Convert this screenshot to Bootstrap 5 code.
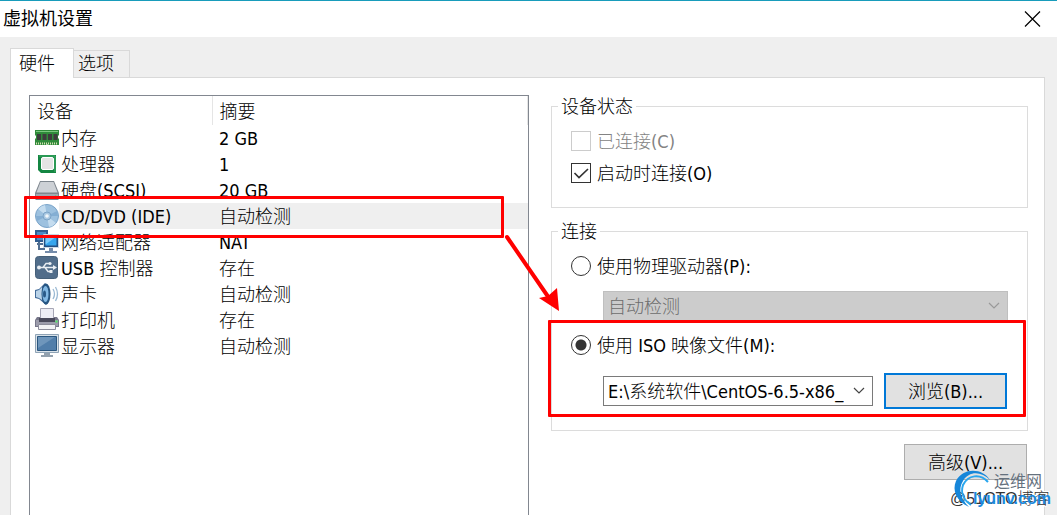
<!DOCTYPE html>
<html lang="zh-CN">
<head>
<meta charset="utf-8">
<meta name="viewport" content="width=device-width, initial-scale=1">
<title>虚拟机设置</title>
<link href="https://cdn.jsdelivr.net/npm/bootstrap@5.3.0/dist/css/bootstrap.min.css" rel="stylesheet">
<style>
body{font:300 18px/26px "DejaVu Sans Condensed","Noto Sans CJK SC",sans-serif;color:#000;background:#efefef}
.window{border-top:1px solid #189cbb;overflow:hidden}
.titlebar{height:36px;padding:0 16px 0 3px;font-weight:400}
.close-btn{width:18px;height:18px}
.tabs{padding:11px 0 0 10px}
.tab{border:1px solid #d9d9d9;border-bottom:0;background:#efefef;color:#000;font:inherit;height:27px;padding:0 15px 0 4px}
.tab.active{background:#fff;height:30px;padding:0 18px 0 8px;margin-bottom:-1px;z-index:1}
.panel{margin:0 12px 0 10px;border:1px solid #d9d9d9;border-bottom:0;background:#fff;padding:14px 16px 0 18px;display:grid;grid-template-columns:500fr 477fr;column-gap:22px}
.devices{border:1px solid #828790;border-bottom:0;margin-top:3px}
.device-table{width:100%;table-layout:fixed;line-height:24px}
.device-table th{font-weight:300;height:29px;padding:3px 7px 0;border-right:1px solid #e5e5e5}
.device-table td{height:26px;padding:2px 0 0;white-space:nowrap}
.device-table td:first-child{padding:1px 0 1px 5px}
.device-table td:nth-child(2){padding-left:2px}
.device-table td:nth-child(3){padding-left:7px}
.device-table svg{display:block;width:24px;height:24px}
.selected td:not(:first-child){background:#efefef}
.group{border:1px solid #dcdcdc;padding:5px 19px 18px}
.group legend{font-size:18px;line-height:26px;padding:2px 3px 0;margin:0 0 0 -13px}
.group + .group{margin-top:9px;padding-bottom:21px}
.choice{height:32px;gap:6px}
.choice input{appearance:none;width:20px;height:20px;margin:0;border:1px solid #333;background:#fff;flex:none}
.choice input[type=radio]{border-radius:50%}
.choice input[type=radio]:checked{background:radial-gradient(circle,#333 5px,#fff 6px)}
.choice input[type=checkbox]:checked{background:#fff url("data:image/svg+xml,%3Csvg xmlns='http://www.w3.org/2000/svg' viewBox='0 0 18 18'%3E%3Cpath d='M2.500 9l4.500 4.500L16 5' fill='none' stroke='%23333' stroke-width='1.700'/%3E%3C/svg%3E")}
.choice input:disabled{border-color:#ccc}
.choice span{padding-top:1px}
.choice.off{color:#838383}
.combo{appearance:none;font:inherit;height:30px;line-height:26px;border:1px solid #7a7a7a;border-radius:0;color:#000;padding:1px 28px 0 4px;min-width:0;background:#fff url("data:image/svg+xml,%3Csvg xmlns='http://www.w3.org/2000/svg' viewBox='0 0 12 8'%3E%3Cpath d='M1 1l5 5 5-5' fill='none' stroke='%23444' stroke-width='1.200'/%3E%3C/svg%3E") no-repeat right 7px center/12px 8px}
.combo:disabled{opacity:1;color:#6d6d6d;border-color:#bfbfbf;background-color:#ccc;background-image:url("data:image/svg+xml,%3Csvg xmlns='http://www.w3.org/2000/svg' viewBox='0 0 12 8'%3E%3Cpath d='M1 1l5 5 5-5' fill='none' stroke='%23999' stroke-width='1.200'/%3E%3C/svg%3E")}
.indent{margin-left:32px}
.drive{margin-top:9px}
.iso-row{gap:11px;padding-right:1px}
.push{width:123px;height:36px;background:#e1e1e1;border:1px solid #adadad;color:#000;font:inherit;padding:2px 0 0}
.push.focus{border:2px solid #0078d7}
.advanced{margin:13px 1px 0 0}
.mark-box{border:3px solid #f00;border-radius:1px;pointer-events:none}
.mark-row{left:-6px;top:100px;width:480px;height:42px}
.mark-iso{left:-23px;right:-18px;top:-1px;bottom:-8px}
.mark-arrow{left:-48px;top:139px;pointer-events:none}
.watermark{right:0;bottom:0;pointer-events:none}
</style>
</head>
<body>
<div class="window min-vh-100 d-flex flex-column position-relative">
<header class="titlebar bg-white d-flex align-items-center justify-content-between">
<span>虚拟机设置</span>
<button class="close-btn border-0 bg-transparent p-0 d-flex" aria-label="关闭"><svg width="18" height="18" viewBox="0 0 18 18" stroke="#000" stroke-width="1.200"><path d="M2 1.500l15 15M17 1.500l-15 15"/></svg></button>
</header>
<div class="tabs d-flex align-items-end" role="tablist">
<button class="tab active position-relative" role="tab" aria-selected="true">硬件</button><button class="tab border-start-0" role="tab" aria-selected="false">选项</button>
</div>
<main class="panel flex-grow-1">
<div class="devices position-relative">
<table class="device-table">
<colgroup><col style="width:29px"><col style="width:153px"><col></colgroup>
<thead><tr><th colspan="2">设备</th><th>摘要</th></tr></thead>
<tbody>
<tr><td><svg viewBox="0 0 24 24"><path d="M0 4h24v5l-1 1v2l1 1v6H13l-1-1-1 1H0v-6l1-1v-2L0 9z" fill="#2f8a3a"/><path d="M1 5.500h22" stroke="#7cc680"/><path d="M2 8h4v6H2zM7.500 8h4v6h-4zM13 8h4v6h-4zM18.500 8h4v6h-4z" fill="#3c3c3c"/><path d="M1 17.500h22" stroke="#d3dfb0" stroke-width="2" stroke-dasharray="1 1"/></svg></td><td>内存</td><td>2 GB</td></tr>
<tr><td><svg viewBox="0 0 24 24"><path d="M3 3h18v18H6l-3-3z" fill="#148642"/><path d="M4 4h16v16" fill="none" stroke="#42ad68"/><rect x="6.500" y="5.500" width="12" height="12" rx="1.500" fill="#e4e4e4" stroke="#fff"/></svg></td><td>处理器</td><td>1</td></tr>
<tr><td><svg viewBox="0 0 24 24"><path d="M5 3h14l5 12v6l-1 1H1l-1-1v-6z" fill="#7f878f"/><path d="M5.500 4h13l4 10.500h-21z" fill="#cdd1d6"/><path d="M1 16h22v5H1z" fill="#a2a9b1"/><circle cx="20.500" cy="18.500" r="1" fill="#3fda4a"/></svg></td><td>硬盘(SCSI)</td><td>20 GB</td></tr>
<tr class="selected"><td><svg viewBox="0 0 24 24"><circle cx="12" cy="12" r="11.500" fill="#9dc1df" stroke="#7aa4c9"/><path d="M12 12L3 5a12 12 0 0 1 7-4zM12 12l9 7a12 12 0 0 1-7 4z" fill="#c4dcef"/><path d="M12 12L22 7l1 5zM12 12L2 17l-1-5z" fill="#84aed3"/><circle cx="12" cy="12" r="4" fill="#a9c8e2" stroke="#7ba3c7"/><circle cx="12" cy="12" r="1.800" fill="#f1f6fa"/></svg></td><td>CD/DVD (IDE)</td><td>自动检测</td></tr>
<tr><td><svg viewBox="0 0 24 24"><path d="M0 0h13v12H0z" fill="#315e91"/><path d="M2 2h9v8H2z" fill="#4a8cc7"/><path d="M4 12v7h6M2 14h6" fill="none" stroke="#526f91" stroke-width="2"/><path d="M8.500 4.500h15v13h-15z" fill="#214f82" stroke="#c9d8e5"/><path d="M10.500 6.500h11v9h-11z" fill="#35a5ed"/><path d="M10.500 6.500h11l-11 8z" fill="#79c9fa"/><path d="M14 18h4v3h4v2H10v-2h4z" fill="#758caa"/></svg></td><td>网络适配器</td><td>NAT</td></tr>
<tr><td><svg viewBox="0 0 24 24"><rect x=".5" y=".5" width="22" height="22" rx="3" fill="#516d8a" stroke="#466079"/><path d="M3 11.500h16M8 11.500l3-4h4M10 11.500l3 4h3" fill="none" stroke="#e8edf2" stroke-width="1.400"/><circle cx="4" cy="11.500" r="2" fill="#e8edf2"/><path d="M18 9l4 2.500-4 2.500z" fill="#e8edf2"/><circle cx="15" cy="7.500" r="1.600" fill="#e8edf2"/><path d="M14.500 14h3v3h-3z" fill="#e8edf2"/></svg></td><td>USB 控制器</td><td>存在</td></tr>
<tr><td><svg viewBox="0 0 24 24"><path d="M0 8l4-1 6-6c6 4 7 18 1 22l-7-6-4-1z" fill="#426b99"/><path d="M1 9l3-1 3-3v13l-3-2-3-1z" fill="#bad3e8"/><ellipse cx="11" cy="12" rx="4.500" ry="10.500" fill="#275682"/><ellipse cx="10.500" cy="12" rx="3" ry="8" fill="#83b9e4"/><ellipse cx="9.500" cy="12" rx="1.500" ry="3.500" fill="#2a5a88"/><path d="M18 7q3 5 0 10M20.500 5q4 7 0 14" fill="none" stroke="#9ab9d3" stroke-width="1.300"/></svg></td><td>声卡</td><td>自动检测</td></tr>
<tr><td><svg viewBox="0 0 24 24"><path d="M2 9h20l2 3v7H0v-7z" fill="#77778a"/><path d="M5.500.500h13v10h-13z" fill="#eeeef5" stroke="#a6a6b5"/><path d="M1 12h22v6H1z" fill="#9c9cab"/><path d="M4 10h16v4H4z" fill="#4a4a5b"/><path d="M3.500 16.500h17v5h-17z" fill="#f2f2f5" stroke="#8d8d9b"/><circle cx="21.500" cy="13.500" r="1.200" fill="#59e06c"/></svg></td><td>打印机</td><td>存在</td></tr>
<tr><td><svg viewBox="0 0 24 24"><path d="M.5.500h23v18H.5z" fill="#d9e2e9" stroke="#8fa3b5"/><path d="M2.500 2.500h19v14h-19z" fill="#517eaa" stroke="#2c577f"/><path d="M3 3h17L3 14z" fill="#6f96bb"/><path d="M9 19h6v2h3v2H6v-2h3z" fill="#93a1ae"/></svg></td><td>显示器</td><td>自动检测</td></tr>
</tbody>
</table>
<span class="mark-box mark-row position-absolute"></span>
</div>
<div class="position-relative">
<fieldset class="group">
<legend class="float-none w-auto">设备状态</legend>
<label class="choice off d-flex align-items-center"><input type="checkbox" disabled><span>已连接(C)</span></label>
<label class="choice d-flex align-items-center"><input type="checkbox" checked><span>启动时连接(O)</span></label>
</fieldset>
<fieldset class="group">
<legend class="float-none w-auto">连接</legend>
<label class="choice d-flex align-items-center"><input type="radio" name="source"><span>使用物理驱动器(P):</span></label>
<div class="indent drive d-flex"><select class="combo w-100" aria-label="物理驱动器" disabled><option>自动检测</option></select></div>
<div class="position-relative pt-2 mt-0">
<label class="choice d-flex align-items-center"><input type="radio" name="source" checked><span>使用 ISO 映像文件(M):</span></label>
<div class="indent iso-row d-flex align-items-center mt-2 pt-1">
<select class="combo flex-grow-1" aria-label="ISO 映像文件"><option>E:\系统软件\CentOS-6.5-x86_</option></select>
<button class="push focus flex-shrink-0">浏览(B)...</button>
</div>
<span class="mark-box mark-iso position-absolute"></span>
</div>
</fieldset>
<div class="advanced d-flex justify-content-end"><button class="push">高级(V)...</button></div>
<svg class="mark-arrow position-absolute" width="60" height="86" viewBox="0 0 60 86"><path d="M4 6L46 67" stroke="#f00" stroke-width="4" stroke-linecap="round"/><path d="M56 80L36 67l9-2 9-8z" fill="#f00"/></svg>
</div>
</main>
<svg class="watermark position-absolute" width="110" height="50" viewBox="0 0 110 50">
<text x="3" y="39" font-size="16" fill="#333" stroke="#fff" stroke-width="2" paint-order="stroke" font-family="Liberation Sans, Noto Sans CJK SC, sans-serif">@51CTO博客</text>
<path d="M43 15C36 3 16 2 9 16c-4 9 0 20 13 26-9-9-11-18-6-26C22 6 34 6 43 15z" fill="#1686d9"/><path d="M41 17C33 8 21 10 16 20c-3 9 2 16 8 20" fill="none" stroke="#29a6ee" stroke-width="2"/>
<text x="47" y="22" font-size="16" fill="#65717e" font-weight="400" font-family="Noto Sans CJK SC, sans-serif">运维网</text>
<text x="26" y="39" font-size="16" fill="#1c8ade" font-weight="700" font-family="Liberation Sans, sans-serif">lyunv.com</text>
</svg>
</div>
<script src="https://cdn.jsdelivr.net/npm/bootstrap@5.3.0/dist/js/bootstrap.bundle.min.js"></script>
</body>
</html>
